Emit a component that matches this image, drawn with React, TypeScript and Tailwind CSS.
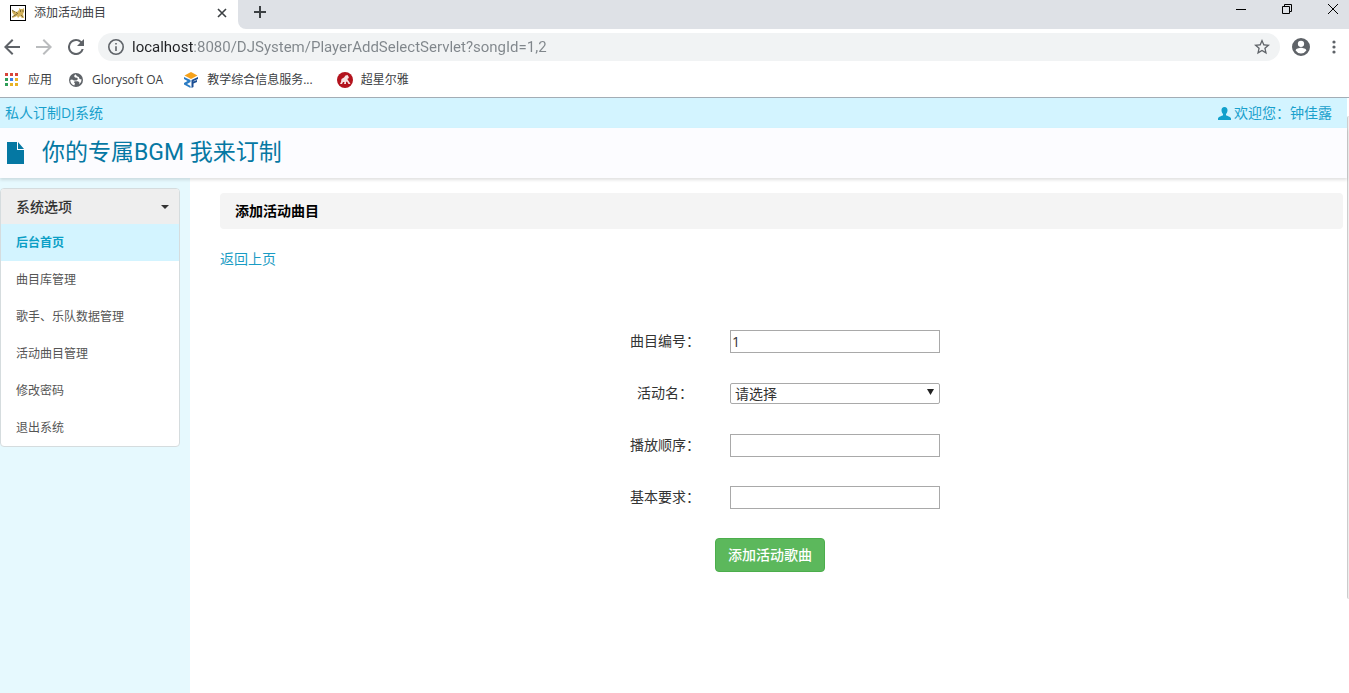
import type { ReactNode } from 'react';

const menu = ['后台首页', '曲目库管理', '歌手、乐队数据管理', '活动曲目管理', '修改密码', '退出系统'];

const url = 'localhost:8080/DJSystem/PlayerAddSelectServlet?songId=1,2';

function FormRow({ id, label, children }: { id: string; label: string; children: ReactNode }) {
  return (
    <div className="flex h-[22px] items-center">
      <label htmlFor={id} className="w-[130px] text-center">
        {label}
      </label>
      {children}
    </div>
  );
}

function TabStrip() {
  return (
    <div className="flex h-[29px] bg-white">
      <div className="flex w-[238px] items-center pr-[11px] pb-1 pl-2.5">
        <svg width="16" height="16" viewBox="0 0 16 16" aria-hidden="true">
          <rect x=".5" y=".5" width="15" height="15" fill="#fff" stroke="#000" />
          <path d="M2 5l2 1 3 1 2-2 0-2 1.500 1h2L14 3v4l-1 2 1 4h-2l-2-2-2 2-1-2-2 1-3 1 2-3-2-3z" fill="#d2b25c" />
          <path d="M2 5l3 2M2 12l5-3M6 7l2 2M11 10l2 2" stroke="#6b5a30" strokeWidth=".8" />
          <path d="M10 6h1M12.500 6h1" stroke="#3b2f12" />
        </svg>
        <span className="ml-2 flex-1 text-xs text-[#3c4043]">添加活动曲目</span>
        <button aria-label="关闭标签页">
          <svg width="10" height="10" viewBox="0 0 10 10" stroke="#3c4043" strokeWidth="1.6">
            <path d="M1 1l8 8M9 1L1 9" />
          </svg>
        </button>
      </div>
      <div className="flex flex-1 items-start rounded-bl-lg bg-[#dee1e6] pr-[11px] pl-4">
        <button aria-label="新标签页" className="pt-1.5">
          <svg width="12" height="12" viewBox="0 0 12 12" stroke="#3c4043" strokeWidth="2">
            <path d="M6 0v12M0 6h12" />
          </svg>
        </button>
        <div className="ml-auto flex gap-9 pt-1">
          <button aria-label="最小化">
            <svg width="10" height="10" viewBox="0 0 10 10" stroke="#000">
              <path d="M0 5.500h10" />
            </svg>
          </button>
          <button aria-label="还原">
            <svg width="10" height="10" viewBox="0 0 10 10" fill="none" stroke="#000">
              <path d="M.5 2.500h7v7h-7zM2.500 2.500v-2h7v7h-2" />
            </svg>
          </button>
          <button aria-label="关闭">
            <svg width="10" height="10" viewBox="0 0 10 10" stroke="#000">
              <path d="M0 0l10 10M10 0L0 10" />
            </svg>
          </button>
        </div>
      </div>
    </div>
  );
}

function Toolbar() {
  return (
    <div className="flex h-9 items-center bg-white pr-[7px] pl-1">
      <button aria-label="后退" className="w-4">
        <svg width="16" height="16" viewBox="4 4 16 16" fill="#5f6368">
          <path d="M20 11H7.83l5.59-5.59L12 4l-8 8 8 8 1.41-1.41L7.83 13H20v-2z" />
        </svg>
      </button>
      <button aria-label="前进" className="ml-4 w-4">
        <svg width="16" height="16" viewBox="4 4 16 16" fill="#babcbe">
          <path d="M12 4l-1.41 1.41L16.17 11H4v2h12.17l-5.58 5.59L12 20l8-8z" />
        </svg>
      </button>
      <button aria-label="重新加载" className="ml-4 w-4">
        <svg width="16" height="16" viewBox="4 4 16 16" fill="#5f6368">
          <path d="M17.65 6.35A7.958 7.958 0 0 0 12 4a8 8 0 1 0 7.73 10h-2.08A6 6 0 1 1 12 6c1.66 0 3.14.69 4.22 1.78L13 11h7V4l-2.35 2.35z" />
        </svg>
      </button>
      <div className="ml-3.5 flex h-7 flex-1 items-center rounded-full bg-[#f1f3f4] px-2.5">
        <svg width="16" height="16" viewBox="2 2 20 20" fill="#5f6368" aria-hidden="true">
          <path d="M11 7h2v2h-2zm0 4h2v6h-2zm1-9a10 10 0 1 0 0 20 10 10 0 0 0 0-20zm0 18a8 8 0 1 1 0-16 8 8 0 0 1 0 16z" />
        </svg>
        {/* host is darker than the rest of the address */}
        <input
          aria-label="地址栏"
          defaultValue={url}
          className="ml-2 flex-1 bg-[linear-gradient(90deg,#202124_62px,#80868b_62px)] bg-clip-text font-[Roboto,sans-serif] text-[15px] leading-5 text-transparent outline-none"
        />
        <button aria-label="收藏">
          <svg width="16" height="16" viewBox="2 2 20 20" fill="#5f6368">
            <path d="M22 9.24l-7.19-.62L12 2 9.19 8.63 2 9.24l5.46 4.73L5.82 21 12 17.27 18.18 21l-1.63-7.03L22 9.24zM12 15.4l-3.76 2.27 1-4.28-3.32-2.88 4.38-.38L12 6.1l1.71 4.04 4.38.38-3.32 2.88 1 4.28L12 15.4z" />
          </svg>
        </button>
      </div>
      <button aria-label="用户" className="ml-3">
        <svg width="18" height="18" viewBox="2 2 20 20" fill="#5f6368">
          <path d="M12 2a10 10 0 1 0 0 20 10 10 0 0 0 0-20zm0 3a3.5 3.5 0 1 1 0 7 3.5 3.5 0 0 1 0-7zm0 14.2a7.2 7.2 0 0 1-6-3.22c.03-1.99 4-3.08 6-3.08s5.97 1.09 6 3.08a7.2 7.2 0 0 1-6 3.22z" />
        </svg>
      </button>
      <button aria-label="菜单" className="ml-4">
        <svg width="16" height="16" viewBox="0 0 16 16" fill="#5f6368">
          <circle cx="8" cy="3" r="1.6" />
          <circle cx="8" cy="8" r="1.6" />
          <circle cx="8" cy="13" r="1.6" />
        </svg>
      </button>
    </div>
  );
}

function AppsIcon() {
  const colors = ['#d8453a', '#d8453a', '#d8453a', '#2f9e58', '#3f7fe8', '#e8b224', '#2f9e58', '#e8b224', '#e8b224'];
  return (
    <svg width="14" height="14" viewBox="0 0 14 14" aria-hidden="true">
      {colors.map((c, i) => (
        <rect key={i} x={(i % 3) * 5} y={Math.floor(i / 3) * 5} width="3" height="3" fill={c} />
      ))}
    </svg>
  );
}

function Bookmarks() {
  return (
    <nav className="flex h-[33px] items-center border-b border-[#a3adb5] bg-white pb-0.5 pl-[5px] text-xs text-[#3c4043]">
      <a href="#" className="flex items-center gap-[9px]">
        <AppsIcon />
        应用
      </a>
      <a href="#" className="ml-4 flex items-center gap-2">
        <svg width="16" height="16" viewBox="0 0 16 16" aria-hidden="true">
          <circle cx="8" cy="8" r="7" fill="#5f6368" />
          <path d="M7.500 2.300L6 4l1 1.500 2 .2 1 1.300L8.500 8.500H6L4 7.500 2.300 8a6 6 0 0 0 4 5.500L7 11.500 5.800 10 7 9.300h3l1.500 1.200-.5 2A6 6 0 0 0 13.600 7.500l-2-.5-.8-2L9 4.300z" fill="#fff" />
        </svg>
        Glorysoft OA
      </a>
      <a href="#" className="ml-5 flex items-center gap-2">
        <svg width="16" height="16" viewBox="0 0 16 16" aria-hidden="true">
          <path d="M1.500 3.500L8 0l6.500 3.500L8 7z" fill="#f6a21b" />
          <path d="M1 5l6.500 3v2L4 12l3.500 2v2L1 12.500V11l3.500-2L1 7z" fill="#2b7cc4" />
          <path d="M15 5L8.500 8v8l2-1v-3.500L14 10V8l-3.500 1.500V9L15 7z" fill="#1b4f94" />
        </svg>
        教学综合信息服务...
      </a>
      <a href="#" className="ml-6 flex items-center gap-2">
        <svg width="16" height="16" viewBox="0 0 16 16" aria-hidden="true">
          <circle cx="8" cy="8" r="8" fill="#b3131d" />
          <path d="M3 12l1-2 .5-3L7 5.500 8.500 3.500l2-.5 1 1.500.5 2-1-.5-.5 1.500 1.500 2 1.500 2.500h-2L10 9.500 9 10v2H7l.5-2L6 10l-1 2z" fill="#f7e3e3" />
        </svg>
        超星尔雅
      </a>
    </nav>
  );
}

export default function App() {
  return (
    <div className="flex min-h-screen flex-col bg-white font-['Open_Sans','Noto_Sans_CJK_SC',sans-serif] text-sm leading-5 text-[#333]">
      <TabStrip />
      <Toolbar />
      <Bookmarks />
      <div className="flex flex-1">
        <div className="flex min-w-0 flex-1 flex-col">
          <div className="flex h-[30px] items-center justify-between bg-[#d3f4ff] pr-[15px] pl-[5px] text-[#19a0cc]">
            <a href="#">私人订制DJ系统</a>
            <a href="#" className="flex items-center gap-[3px]">
              <svg width="13" height="13" viewBox="0 0 13 13" fill="#12a0cb" aria-hidden="true">
                <path d="M6.500 0C8.500 0 9.600 1.400 9.500 3.500 9.400 5.500 8.500 6.500 8 7v1.300c1 .8 4.500 1.200 5 3.200V13H0v-1.500c.5-2 4-2.400 5-3.200V7C4.500 6.500 3.600 5.500 3.500 3.500 3.400 1.400 4.500 0 6.500 0z" />
              </svg>
              欢迎您：钟佳露
            </a>
          </div>
          <header className="z-10 flex h-[50px] items-center bg-[#fcfcff] pl-[7px] text-[#0578a3] shadow-[0_2px_3px_rgba(0,0,0,0.12)]">
            <svg width="17" height="22" viewBox="0 0 17 22" fill="currentColor" aria-hidden="true">
              <path d="M0 0h10v8h7v14H0zM11 0l6 7h-6z" />
            </svg>
            <h1 className="ml-[18px] font-[Roboto,'Noto_Sans_CJK_SC',sans-serif] text-[23px]">你的专属BGM 我来订制</h1>
          </header>
          <div className="flex flex-1">
            <aside className="w-[190px] shrink-0 bg-[#e6f9fe] pt-2.5">
              <nav className="w-[180px] overflow-hidden rounded border border-[#d5dcde] bg-white">
                <button className="flex h-[35px] w-full items-center justify-between bg-[#eee] pr-2.5 pl-[15px] font-medium">
                  系统选项
                  <svg width="8" height="4" viewBox="0 0 8 4" fill="#333" aria-hidden="true">
                    <path d="M0 0h8L4 4z" />
                  </svg>
                </button>
                {menu.map((name, i) => (
                  <a
                    key={name}
                    href="#"
                    className={`flex h-[37px] items-center pl-[15px] text-xs ${
                      i === 0 ? 'bg-[#d3f4ff] font-bold text-[#0b9fc6]' : 'text-[#555]'
                    }`}
                  >
                    {name}
                  </a>
                ))}
              </nav>
            </aside>
            <main className="flex-1 pt-[15px] pr-1 pl-[30px]">
              <h2 className="rounded bg-[#f4f4f4] px-[15px] py-2 font-bold text-black">添加活动曲目</h2>
              <a href="#" className="mt-5 inline-block text-[#1a9cc4]">
                返回上页
              </a>
              <form className="mt-[61px] flex flex-col items-center gap-[30px] pr-[23px]">
                <FormRow id="songId" label="曲目编号：">
                  <input id="songId" defaultValue="1" className="h-[23px] w-[210px] border border-[#a9a9a9] px-px" />
                </FormRow>
                <FormRow id="activity" label="活动名：">
                  <div className="relative">
                    <select
                      id="activity"
                      className="block h-[21px] w-[210px] appearance-none rounded-xs border border-[#a9a9a9] bg-white pl-1 leading-[19px]"
                    >
                      <option>请选择</option>
                    </select>
                    <svg
                      width="7"
                      height="6"
                      viewBox="0 0 7 6"
                      fill="#222"
                      className="pointer-events-none absolute top-1.5 right-1.5"
                      aria-hidden="true"
                    >
                      <path d="M0 0h7L3.500 6z" />
                    </svg>
                  </div>
                </FormRow>
                <FormRow id="order" label="播放顺序：">
                  <input id="order" className="h-[23px] w-[210px] border border-[#a9a9a9] px-px" />
                </FormRow>
                <FormRow id="demand" label="基本要求：">
                  <input id="demand" className="h-[23px] w-[210px] border border-[#a9a9a9] px-px" />
                </FormRow>
                <button
                  type="button"
                  className="h-[34px] rounded border border-[#4cae4c] bg-[#5cb85c] px-3 font-medium text-white"
                >
                  添加活动歌曲
                </button>
              </form>
            </main>
          </div>
        </div>
        {/* page scrollbar */}
        <div className="w-0.5 bg-white pt-[18px]">
          <div className="h-[483px] rounded-l-xs border-l border-[#ccc] bg-[#eee]" />
        </div>
      </div>
    </div>
  );
}
